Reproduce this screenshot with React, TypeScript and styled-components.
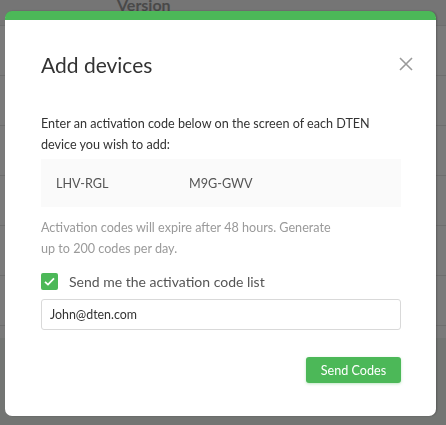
import styled, { createGlobalStyle } from "styled-components";

const GlobalStyle = createGlobalStyle`
    html, body {
        margin: 0;
        padding: 0;
        background: #f0f4f0;
        font-family: Lato, "Noto Sans", sans-serif;
    }
`

const Page = styled.div`
    min-height: 425px;
    background: #f0f4f0;
`

const TableCard = styled.div`
    background: #ffffff;
    height: 338px;
    overflow: hidden;
`

const HeaderRow = styled.div`
    display: flex;
    height: 26px;
    border-bottom: 1px solid #e6e6e6;
    background: #f4f4f4;
    box-sizing: border-box;
`

const HeaderCell = styled.div`
    padding-left: 117px;
    margin-top: -5px;
    font-size: 16px;
    font-weight: 700;
    color: #999;
`

const Row = styled.div`
    height: 50px;
    border-bottom: 1px solid #e6e6e6;
    box-sizing: border-box;
`

const Overlay = styled.div`
    position: fixed;
    inset: 0;
    background: rgba(0, 0, 0, 0.52);
    display: flex;
    align-items: flex-start;
    padding: 11px 0 0 5px;
`

const Modal = styled.div`
    width: 431px;
    box-sizing: border-box;
    background: #fff;
    border-top: 9px solid #4cb858;
    border-radius: 7px;
    padding: 29px 35px 33px 36px;
    box-shadow: 1px 0 2px rgba(0, 0, 0, 0.25);
`

const Header = styled.div`
    display: flex;
    align-items: center;
    justify-content: space-between;
    height: 30px;
`

const Title = styled.h2`
    margin: 0;
    font-size: 21px;
    font-weight: 400;
    color: #333;
`

const CloseButton = styled.button`
    border: 0;
    background: none;
    padding: 0;
    margin-right: -12px;
    width: 14px;
    height: 14px;
    display: flex;
    cursor: pointer;
`

const Text = styled.p<{ $muted?: boolean }>`
    margin: 0;
    font-size: 12.6px;
    line-height: 21px;
    color: ${p => p.$muted ? "#9a9a9a" : "#333"};
`

const Description = styled(Text)`
    margin-top: 34px;
    padding-right: 30px;
`

const Info = styled(Text)`
    margin-top: 10px;
    padding-right: 60px;
`

const CodeBox = styled.div`
    margin-top: 4px;
    height: 48px;
    background: #fafafa;
    display: flex;
    align-items: center;
    padding-left: 15px;
`

const Code = styled.span`
    width: 133px;
    font-size: 12.6px;
    color: #555;
`

const CheckRow = styled.label`
    margin-top: 14px;
    display: flex;
    align-items: center;
    gap: 11px;
    font-size: 14px;
    color: #555;
`

const Box = styled.span`
    width: 17px;
    height: 17px;
    border-radius: 2px;
    background: #4cb858;
    display: flex;
    align-items: center;
    justify-content: center;
`

const EmailInput = styled.input`
    margin-top: 9px;
    width: 100%;
    height: 31px;
    box-sizing: border-box;
    border: 1px solid #d9d9d9;
    border-radius: 3px;
    padding: 0 8px;
    font-family: inherit;
    font-size: 12.4px;
    color: #333;
    outline: none;
`

const Footer = styled.div`
    margin-top: 27px;
    display: flex;
    justify-content: flex-end;
`

const SendButton = styled.button`
    width: 95px;
    height: 26px;
    border: 0;
    border-radius: 3px;
    background: #4cb858;
    color: #fff;
    font-family: inherit;
    font-size: 12.6px;
    box-shadow: 0 1px 3px rgba(76, 184, 88, 0.35);
    cursor: pointer;
`

const codes = ["LHV-RGL", "M9G-GWV"];

const App = () => {
    return <Page>
        <GlobalStyle />
        <TableCard>
            <HeaderRow>
                <HeaderCell>Version</HeaderCell>
            </HeaderRow>
            {[0, 1, 2, 3, 4, 5].map(i => <Row key={i} />)}
        </TableCard>
        <Overlay>
            <Modal>
                <Header>
                    <Title>Add devices</Title>
                    <CloseButton aria-label="Close">
                        <svg width="14" height="14" viewBox="0 0 14 14">
                            <path d="M1 1L13 13M13 1L1 13" stroke="#9a9a9a" strokeWidth="1.6" fill="none" />
                        </svg>
                    </CloseButton>
                </Header>
                <Description>
                    Enter an activation code below on the screen of each DTEN device you wish to add:
                </Description>
                <CodeBox>
                    {codes.map(c => <Code key={c}>{c}</Code>)}
                </CodeBox>
                <Info $muted>
                    Activation codes will expire after 48 hours. Generate up to 200 codes per day.
                </Info>
                <CheckRow>
                    <Box>
                        <svg width="13" height="13" viewBox="0 0 13 13">
                            <path d="M2 6.8L5 9.6L11 3.4" stroke="#fff" strokeWidth="1.8" fill="none" />
                        </svg>
                    </Box>
                    Send me the activation code list
                </CheckRow>
                <EmailInput defaultValue="John@dten.com" />
                <Footer>
                    <SendButton>Send Codes</SendButton>
                </Footer>
            </Modal>
        </Overlay>
    </Page>
}

export default App;
